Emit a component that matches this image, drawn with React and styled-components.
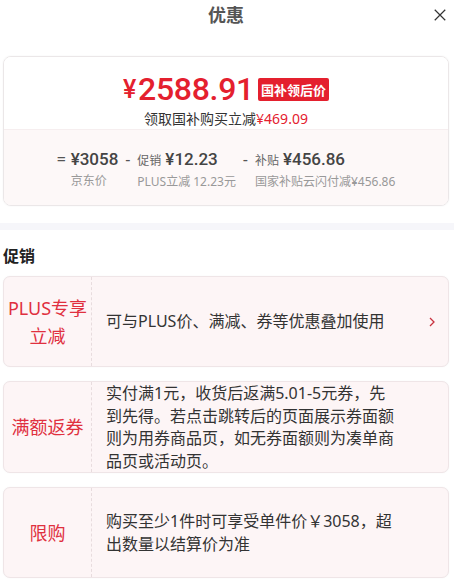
import React from 'react';
import styled, { createGlobalStyle } from 'styled-components';

const GlobalStyle = createGlobalStyle`
    * { box-sizing: border-box; }
    body {
        margin: 0;
        background: #fff;
        font-family: "Noto Sans", "Noto Sans CJK SC", sans-serif;
        color: #333;
    }
`;

const RED = '#e4202e';

const promos = [
    { tag: 'PLUS专享\n立减', text: '可与PLUS价、满减、券等优惠叠加使用', arrow: true },
    { tag: '满额返券', text: '实付满1元，收货后返满5.01-5元券，先到先得。若点击跳转后的页面展示券面额则为用券商品页，如无券面额则为凑单商品页或活动页。' },
    { tag: '限购', text: '购买至少1件时可享受单件价￥3058，超出数量以结算价为准' },
];

const parts = [
    { op: '=', value: '¥3058', label: '京东价' },
    { op: '-', tag: '促销', value: '¥12.23', label: 'PLUS立减 12.23元' },
    { op: '-', tag: '补贴', value: '¥456.86', label: '国家补贴云闪付减¥456.86' },
];

function App() {
    return (
        <>
            <GlobalStyle />
            <Page>
                <Header>
                    <h1>优惠</h1>
                    <Close viewBox="0 0 16 16">
                        <path d="M2 2L14 14M14 2L2 14" />
                    </Close>
                </Header>

                <PriceCard>
                    <PriceTop>
                        <BigPrice>
                            <span className="yen">¥</span>2588.91
                            <Badge>国补领后价</Badge>
                        </BigPrice>
                        <Saving>领取国补购买立减<em>¥469.09</em></Saving>
                    </PriceTop>
                    <PriceBottom>
                        {parts.map((p, i) => (
                            <Part key={i}>
                                <Op>{p.op}</Op>
                                <div>
                                    <Value>
                                        {p.tag && <small>{p.tag}</small>}
                                        {p.value}
                                    </Value>
                                    <Label>{p.label}</Label>
                                </div>
                            </Part>
                        ))}
                    </PriceBottom>
                </PriceCard>

                <Band />

                <SectionTitle>促销</SectionTitle>
                <PromoList>
                    {promos.map((p, i) => (
                        <Promo key={i}>
                            <PromoTag>{p.tag}</PromoTag>
                            <PromoText>{p.text}</PromoText>
                            <PromoArrow>
                                {p.arrow && (
                                    <svg viewBox="0 0 8 12">
                                        <polyline points="2,2 6,6 2,10" />
                                    </svg>
                                )}
                            </PromoArrow>
                        </Promo>
                    ))}
                </PromoList>
            </Page>
        </>
    );
}

const Page = styled.div`
    width: 454px;
    height: 585px;
    overflow: hidden;
    padding: 0 5px 0 3px;
`;

const Header = styled.div`
    height: 56px;
    display: flex;
    justify-content: center;
    position: relative;
    h1 {
        margin: 0;
        padding-top: 3px;
        font-size: 18px;
        line-height: 24px;
        font-weight: 700;
        color: #555;
    }
`;

const Close = styled.svg`
    position: absolute;
    right: 2px;
    top: 8px;
    width: 14px;
    height: 14px;
    stroke: #333;
    stroke-width: 1.4;
    fill: none;
`;

const PriceCard = styled.div`
    border: 1px solid #ebe7e8;
    border-radius: 8px;
    overflow: hidden;
    box-shadow: 0 0 2px rgba(0, 0, 0, 0.06);
`;

const PriceTop = styled.div`
    height: 72px;
    background: #fff;
    display: flex;
    flex-direction: column;
    align-items: center;
    padding-top: 14px;
    position: relative;
    &::after {
        content: '';
        position: absolute;
        left: 225px;
        bottom: 0;
        border: 5px solid transparent;
        border-bottom-color: #fdf8f8;
    }
`;

const BigPrice = styled.div`
    display: flex;
    align-items: center;
    color: ${RED};
    font-family: Roboto, "Noto Sans", sans-serif;
    font-size: 32px;
    font-weight: 500;
    line-height: 32px;
    letter-spacing: -0.3px;
    .yen {
        font-size: 25px;
        margin-right: 2px;
        margin-top: 3px;
    }
`;

const Badge = styled.span`
    margin-left: 4px;
    margin-top: 1px;
    background: ${RED};
    color: #fff;
    font-family: "Noto Sans CJK SC", sans-serif;
    font-size: 13px;
    font-weight: 700;
    line-height: 23px;
    padding: 0 3px;
    border-radius: 2px;
    letter-spacing: 0;
`;

const Saving = styled.div`
    margin-top: 4px;
    font-size: 14px;
    line-height: 18px;
    color: #333;
    em {
        font-style: normal;
        color: ${RED};
    }
`;

const PriceBottom = styled.div`
    height: 76px;
    background: #fdf8f8;
    border-top: 1px solid #f6eeef;
    display: flex;
    justify-content: center;
    gap: 5px;
    padding-top: 17px;
`;

const Part = styled.div`
    display: flex;
    gap: 5px;
`;

const Op = styled.span`
    font-size: 16px;
    line-height: 24px;
    color: #555;
    width: 9px;
    text-align: center;
`;

const Value = styled.div`
    font-family: Roboto, "Noto Sans", sans-serif;
    font-size: 17px;
    font-weight: 500;
    line-height: 24px;
    color: #444;
    small {
        font-family: "Noto Sans CJK SC", sans-serif;
        font-size: 12px;
        font-weight: 400;
        color: #666;
        margin-right: 4px;
    }
`;

const Label = styled.div`
    margin-top: 2px;
    font-size: 12px;
    line-height: 16px;
    color: #999;
    white-space: nowrap;
`;

const Band = styled.div`
    height: 7px;
    margin: 17px -5px 0 -3px;
    background: #f6f6fa;
`;

const SectionTitle = styled.h2`
    margin: 0;
    padding-top: 14px;
    height: 46px;
    font-size: 16px;
    line-height: 24px;
    font-weight: 700;
    color: #222;
`;

const PromoList = styled.div`
    display: flex;
    flex-direction: column;
    gap: 14px;
`;

const Promo = styled.div`
    display: flex;
    min-height: 91px;
    background: #fdf5f6;
    border: 1px solid #efe5e7;
    border-radius: 7px;
    box-shadow: 0 0 2px rgba(0, 0, 0, 0.04);
`;

const PromoTag = styled.div`
    flex: 0 0 88px;
    display: flex;
    align-items: center;
    justify-content: center;
    text-align: center;
    white-space: pre-line;
    border-right: 1px dashed #e8dcde;
    color: #e0303f;
    font-size: 18px;
    line-height: 28px;
`;

const PromoText = styled.div`
    flex: 0 0 306px;
    display: flex;
    align-items: center;
    padding: 0 0 0 14px;
    font-size: 16px;
    line-height: 22.5px;
    color: #333;
`;

const PromoArrow = styled.div`
    flex: 1;
    display: flex;
    align-items: center;
    justify-content: flex-end;
    padding-right: 12px;
    svg {
        width: 8px;
        height: 12px;
        fill: none;
        stroke: #c8323f;
        stroke-width: 1.3;
    }
`;

export default App;
